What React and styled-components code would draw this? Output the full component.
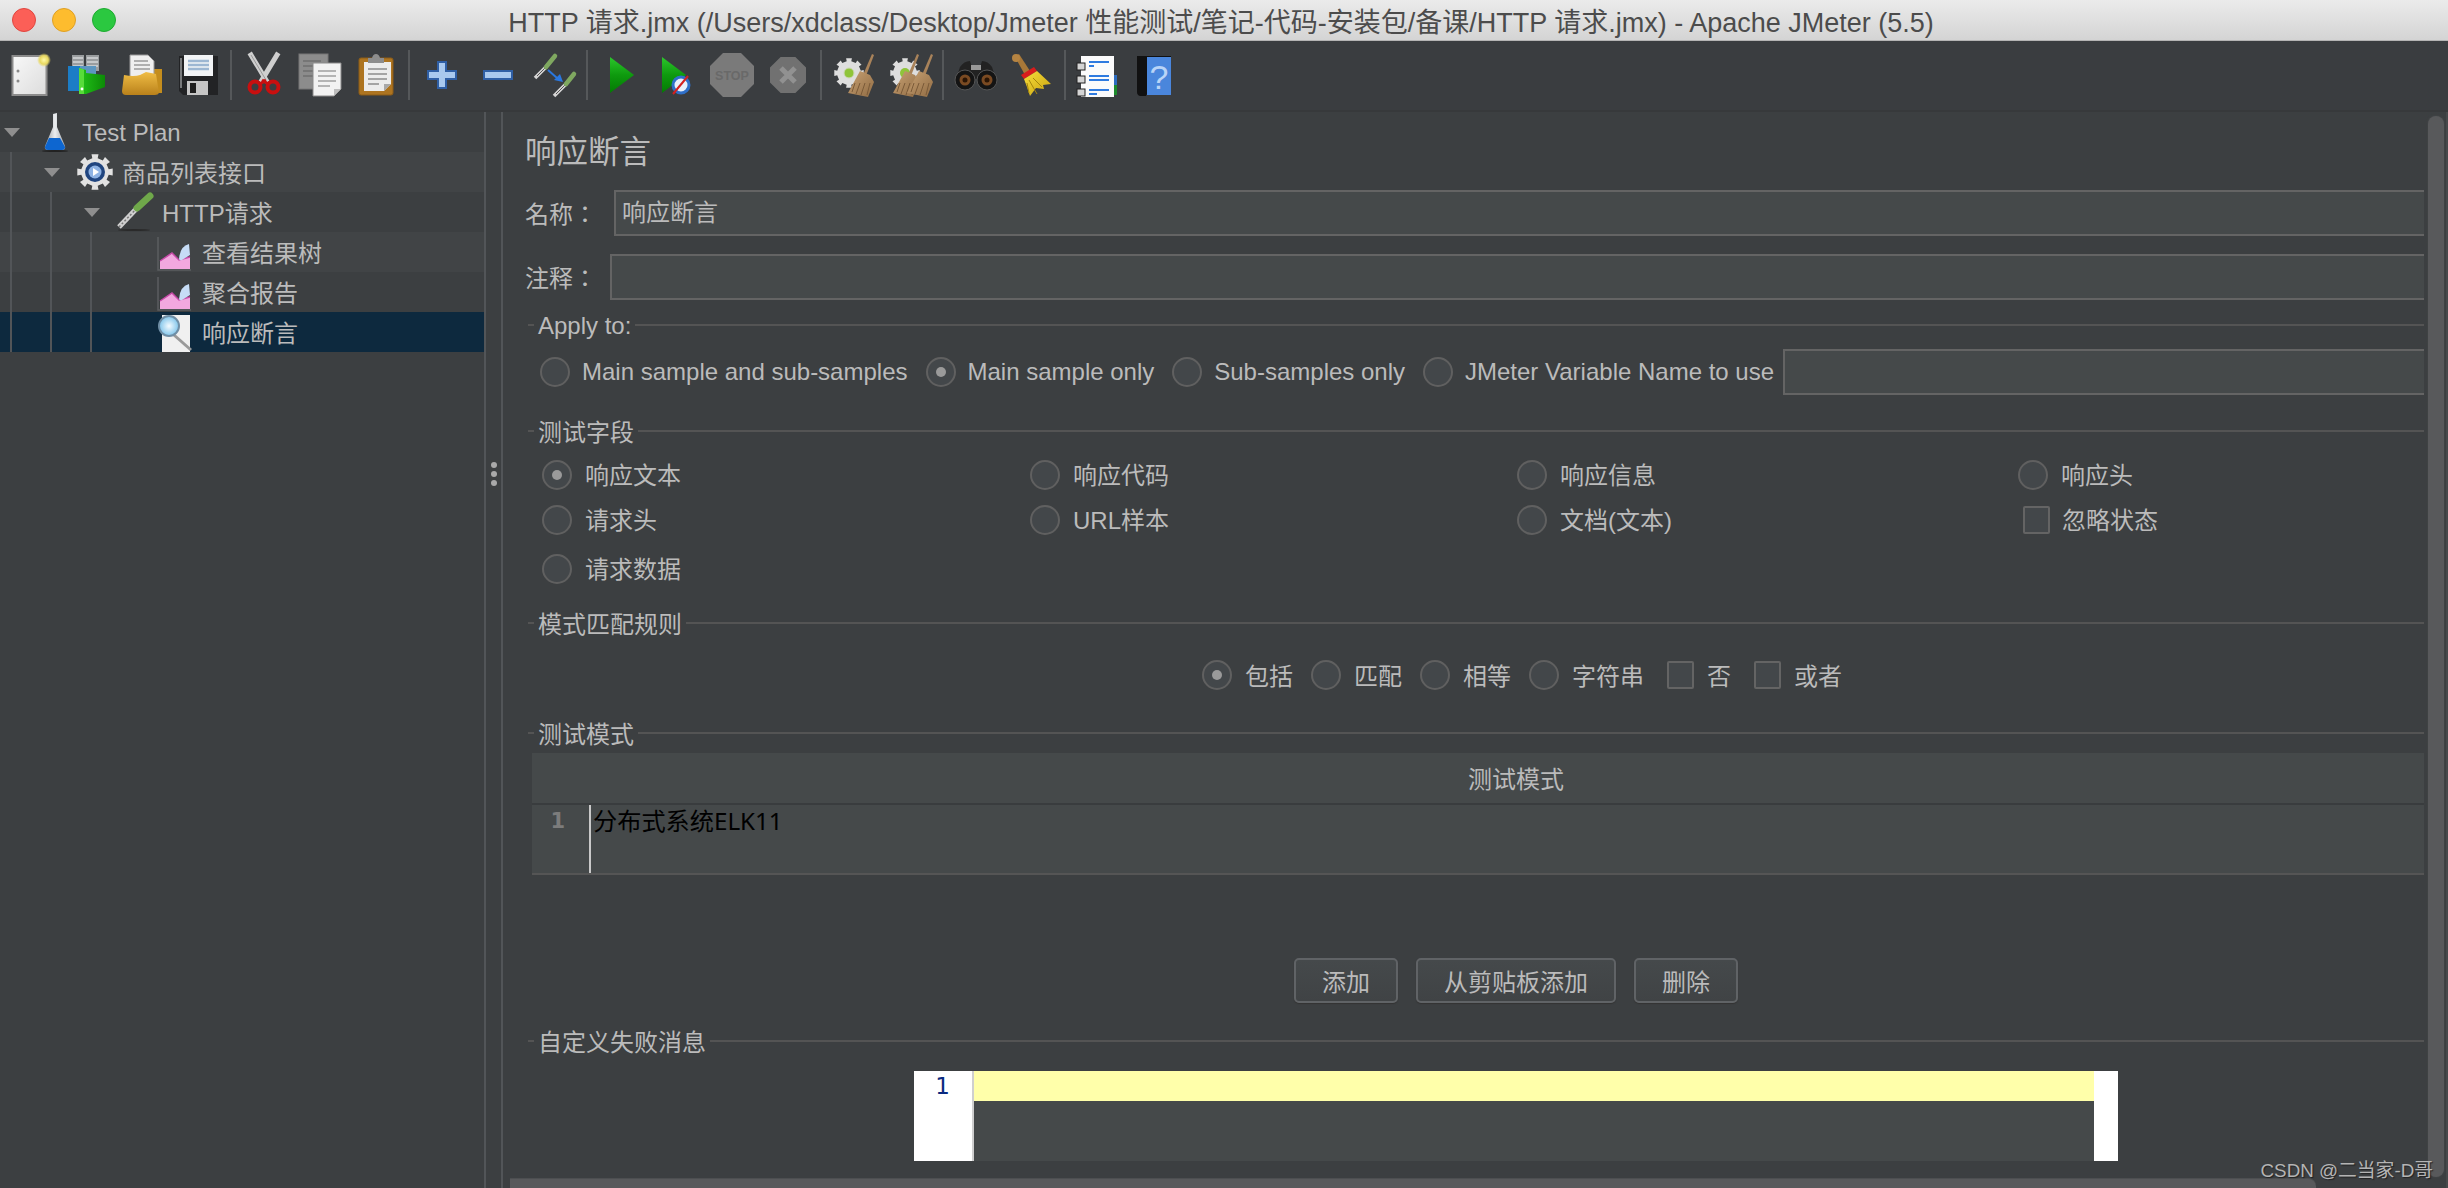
import React from 'react';
import styled, { createGlobalStyle } from 'styled-components';

const Global = createGlobalStyle`
  html, body { margin: 0; padding: 0; background: #3c3f41; }
  * { box-sizing: border-box; }
`;
const FONT = `"Liberation Sans", "Noto Sans CJK SC", sans-serif`;

const Page = styled.div`
  position: relative; width: 2448px; height: 1188px; overflow: hidden;
  display: flex; flex-direction: column; background: #3c3f41; color: #bbbbbb;
  font-family: ${FONT}; font-size: 24px;
`;
const TitleBar = styled.header`
  height: 41px; flex: none; display: flex; align-items: center; justify-content: center; padding-right: 6px;
  background: linear-gradient(#ebebeb, #d4d4d4); border-bottom: 1px solid #b4b4b4; position: relative;
`;
const Lights = styled.div`
  position: absolute; left: 12px; top: 8px; display: flex; gap: 16px;
`;
const Light = styled.span`
  width: 24px; height: 24px; border-radius: 50%; background: ${p => p.$c}; border: 1px solid ${p => p.$b};
`;
const WindowTitle = styled.div`
  color: #4c4c4c; font-size: 27px; white-space: pre;
`;
const Toolbar = styled.nav`
  height: 71px; flex: none; display: flex; align-items: center; padding: 0 0 2px 2px;
  background: #3a3d40; border-bottom: 2px solid #37393b;
`;
const ToolBtn = styled.div`
  width: 56px; height: 44px; flex: none; display: flex; justify-content: center;
  svg { display: block; }
`;
const ToolSep = styled.div`
  width: 2px; height: 50px; margin: 0 4px; background: #55585a; flex: none;
`;
const Body = styled.main`
  flex: 1; min-height: 0; display: flex;
`;
const Tree = styled.aside`
  width: 484px; flex: none;
`;
const Row = styled.div`
  height: 40px; display: flex; align-items: center; white-space: nowrap;
  background: ${p => p.$sel ? '#0d293e' : p.$alt ? '#414446' : 'transparent'};
`;
const Guide = styled.span`
  width: 40px; align-self: stretch; flex: none; position: relative;
  &::before { content: ''; position: absolute; left: 10px; top: 0; bottom: 0; width: 2px; background: #525558; }
`;
const ArrowCell = styled.span`
  width: 24px; flex: none; display: flex; justify-content: center;
`;
const Arrow = styled.span`
  width: 0; height: 0; border-left: 8px solid transparent; border-right: 8px solid transparent;
  border-top: 9px solid #8f8f8f;
  visibility: ${p => p.$hidden ? 'hidden' : 'visible'};
`;
const TreeIcon = styled.span`
  width: 38px; height: 38px; flex: none; margin: 0 8px 0 12px; svg { display: block; }
`;
const TreeLabel = styled.span`
  padding-top: ${p => p.$latin ? 2 : 0}px; padding-bottom: ${p => p.$latin ? 0 : 1}px;
`;
const Splitter = styled.div`
  width: 19px; flex: none; display: flex; flex-direction: column; align-items: center; justify-content: center; gap: 3px;
  border-left: 2px solid #525558; border-right: 2px solid #525558; padding-bottom: 352px;
`;
const Dot = styled.span`
  width: 6px; height: 6px; border-radius: 50%; background: #a9a9a9;
`;
const Right = styled.section`
  flex: 1; min-width: 0; position: relative;
`;
const Clip = styled.div`
  width: 1921px; height: 100%; overflow: hidden;
`;
const Content = styled.div`
  width: 2001px; padding: 13px 0 0 22px; display: flex; flex-direction: column;
`;
const Heading = styled.h1`
  margin: 0; height: 52px; line-height: 54px; font-size: 31.5px; font-weight: 400; color: #bbb;
`;
const Field = styled.div`
  display: flex; align-items: center; height: 46px; margin-top: ${p => p.$mt}px;
`;
const Label = styled.label`
  width: ${p => p.$w}px; flex: none; padding-bottom: 1px;
  font-family: "Liberation Sans", "Noto Sans CJK TC", sans-serif;
`;
const Input = styled.div`
  flex: 1; height: 46px; background: #45494a; border: 2px solid #646464; padding-left: 6px; line-height: 42px;
  margin-left: ${p => p.$ml || 0}px;
`;
const Legend = styled.div`
  height: 30px; margin: ${p => p.$mt}px 0 0 3px; display: flex; align-items: center; gap: 4px;
  &::before { content: ''; width: 6px; height: 2px; background: #545454; flex: none; }
  &::after { content: ''; flex: 1; height: 2px; background: #545454; }
`;
const LegendText = styled.span`
  flex: none; padding-top: ${p => p.$latin ? 2 : 0}px; padding-bottom: ${p => p.$latin ? 0 : 2}px;
`;
const ApplyRow = styled.div`
  height: 46px; margin: 8px 0 0 15px; display: flex; align-items: center; gap: 18px; padding-top: 1px;
`;
const Opt = styled.span`
  display: inline-flex; align-items: center; gap: ${p => p.$gap || 12}px; white-space: nowrap; flex: none;
`;
const OptText = styled.span`
  padding-bottom: ${p => p.$lift ? 2 : 0}px;
`;
const Radio = styled.span`
  width: 30px; height: 30px; border-radius: 50%; flex: none; border: 2px solid #606060; background: #43474a;
  display: flex; align-items: center; justify-content: center;
  &::after { content: ''; width: 10px; height: 10px; border-radius: 50%; background: #9a9a9a; display: ${p => p.$on ? 'block' : 'none'}; }
`;
const Check = styled.span`
  width: 27px; height: 28px; margin-left: 5px; flex: none; border: 2px solid #646464; border-radius: 2px; background: #43474a;
`;
const FieldGrid = styled.div`
  display: grid; grid-template-columns: 488px 487px 501px 1fr; grid-template-rows: 45px 49px 30px;
  margin: 10px 0 0 17px; align-items: start;
`;
const PatternRow = styled.div`
  height: 30px; margin: 22px 0 0 13px; padding-left: 2px; display: flex; justify-content: center; gap: 18px;
  align-items: center;
`;
const Table = styled.div`
  margin: 5px 0 0 7px; width: 1968px;
`;
const TableHead = styled.div`
  height: 52px; background: #45494a; border-bottom: 2px solid #393c3e; text-align: center; line-height: 54px;
`;
const Editor = styled.div`
  height: 70px; background: #45494a; border-bottom: 2px solid #555; display: flex;
`;
const Gutter = styled.div`
  width: 59px; flex: none; border-right: 2px solid #c9c9c9; text-align: right; padding: 1px 24px 0 0;
  color: #7c7c7c; font: 700 21px/30px "DejaVu Sans", sans-serif;
`;
const Code = styled.div`
  color: #000; padding-left: 2px; font: 24.2px/40px "Noto Sans", "Noto Sans CJK SC", sans-serif; height: 34px; margin-top: -4px;
`;
const Buttons = styled.div`
  margin-top: 83px; height: 45px; display: flex; justify-content: center; gap: 18px; padding-left: 3px;
`;
const Btn = styled.button`
  width: ${p => p.$w}px; height: 45px; padding: 0; border: 2px solid #606366; border-radius: 5px;
  background: linear-gradient(#45494b, #404345); color: #bbb; font: inherit; box-shadow: 0 1px 1px #333;
`;
const MsgEditor = styled.div`
  width: 1204px; height: 90px; margin: 15px 0 0 389px; display: flex; background: #fff;
`;
const MsgGutter = styled.div`
  width: 60px; flex: none; background: #fff; border-right: 2px solid #cfcfcf; color: #0a2a80;
  font: 23px/30px "DejaVu Sans", sans-serif; text-align: right; padding-right: 22px;
`;
const MsgArea = styled.div`
  flex: 1; background: #45494a;
`;
const MsgLine = styled.div`
  height: 30px; background: #ffffaa;
`;
const MsgMargin = styled.div`
  width: 24px; flex: none; background: #fff;
`;
const VScroll = styled.div`
  position: absolute; left: 1925px; top: 4px; width: 16px; height: 1061px; background: #58595b;
  border-radius: 8px; box-shadow: 0 0 2px #4a4c4e;
`;
const HScroll = styled.div`
  position: absolute; left: 7px; bottom: 0; width: 1806px; height: 10px; background: #58595b;
  border-radius: 0 8px 0 0; border-top: 1px solid #4d4f51;
`;
const Edge = styled.div`
  position: absolute; left: 1943px; top: 0; bottom: 0; width: 2px; background: #47494b;
`;
const Watermark = styled.div`
  position: absolute; right: 15px; bottom: 6px; font-size: 18.8px; color: #b4b4b4; text-shadow: 1px 1px 1px #222;
  white-space: nowrap;
`;

/* ---------- toolbar drawings ---------- */
const I = ({ children }) => <svg width="44" height="44" viewBox="0 0 44 44" style={{ overflow: 'visible' }}>{children}</svg>;

const Defs = () => (
  <svg width="0" height="0" style={{ position: 'absolute' }}>
    <defs>
      <linearGradient id="paper" x1="0" y1="0" x2="1" y2="1"><stop offset="0" stopColor="#f8f8f8" /><stop offset="1" stopColor="#dcdcdc" /></linearGradient>
      <radialGradient id="glow"><stop offset="0" stopColor="#fff9a8" /><stop offset="0.6" stopColor="#e8d860" /><stop offset="1" stopColor="#e8d860" stopOpacity="0" /></radialGradient>
      <linearGradient id="green" x1="0" y1="0" x2="1" y2="0"><stop offset="0" stopColor="#23c41a" /><stop offset="1" stopColor="#0c8a06" /></linearGradient>
      <linearGradient id="orange" x1="0" y1="0" x2="0" y2="1"><stop offset="0" stopColor="#f0bd45" /><stop offset="1" stopColor="#b9811b" /></linearGradient>
      <linearGradient id="play" x1="0" y1="0" x2="0" y2="1"><stop offset="0" stopColor="#2cc72c" /><stop offset="0.5" stopColor="#0e9a0e" /><stop offset="1" stopColor="#047a04" /></linearGradient>
      <linearGradient id="yellow" x1="0" y1="0" x2="1" y2="1"><stop offset="0" stopColor="#f7dc3a" /><stop offset="1" stopColor="#c9a410" /></linearGradient>
      <linearGradient id="tan" x1="0" y1="0" x2="1" y2="1"><stop offset="0" stopColor="#c9a274" /><stop offset="1" stopColor="#8f6b43" /></linearGradient>
      <radialGradient id="lens"><stop offset="0" stopColor="#f4fbff" /><stop offset="1" stopColor="#7fc4ea" /></radialGradient>
      <linearGradient id="flask" x1="0" y1="0" x2="1" y2="0"><stop offset="0" stopColor="#8f959a" /><stop offset="0.5" stopColor="#eceef0" /><stop offset="1" stopColor="#9aa0a6" /></linearGradient>
    </defs>
  </svg>
);

const NewDoc = () => <I>
  <rect x="4.5" y="3" width="34" height="39" fill="url(#paper)" stroke="#8b8b8b" strokeWidth="2" />
  <circle cx="10" cy="18" r="1.5" fill="#888" /><circle cx="10" cy="28" r="1.5" fill="#888" />
  <circle cx="36" cy="7" r="7" fill="url(#glow)" />
</I>;
const Templates = () => <I>
  <path d="M8 2h12v16H8zM22 2h13v16H22z" fill="#9a9d9f" />
  <path d="M9 5h10M9 9h10M9 13h10M23 5h11M23 9h11M23 13h11" stroke="#c6c8ca" strokeWidth="2" />
  <rect x="4" y="13" width="15" height="25" fill="#1c7dc6" /><rect x="16" y="13" width="16" height="10" fill="#5d96c0" />
  <path d="M15 15l7 2v3l19 2v12l-19 7h-7z" fill="url(#green)" />
  <path d="M15 15l5 1.5V41h-5z" fill="#58dc3a" /><circle cx="18" cy="36" r="1.4" fill="#fff" />
</I>;
const OpenFolder = () => <I>
  <rect x="30" y="16" width="12" height="24" fill="#c48d1d" />
  <path d="M10 2h18l6 6v18H10z" fill="#efefef" stroke="#999" />
  <path d="M14 8h14M14 12h16M14 16h16" stroke="#9a9a9a" strokeWidth="1.5" />
  <path d="M4 22q10 2 16 0l6-3 10 2 3 19q-1 2-4 2H6q-4 0-4-4z" fill="url(#orange)" />
</I>;
const Save = () => <I>
  <path d="M3 3h39v39H7l-4-4z" fill="#222325" /><path d="M5 5v30" stroke="#77797b" strokeWidth="2" />
  <rect x="8" y="2" width="29" height="21" fill="#f2f4f6" />
  <path d="M12 8h21M12 12h21M12 16h21" stroke="#9db7d2" strokeWidth="2.4" />
  <rect x="11" y="28" width="21" height="14" fill="#c6c6c6" /><rect x="14" y="30" width="6" height="10" fill="#1e1e1e" />
</I>;
const Scissors = () => <I>
  <path d="M9 2l15 25M35 2L20 27" stroke="#cfcfcf" strokeWidth="5" strokeLinecap="square" />
  <path d="M9 2l15 25" stroke="#9a9a9a" strokeWidth="1" />
  <circle cx="13" cy="34" r="5.5" fill="none" stroke="#c80f0f" strokeWidth="4" />
  <circle cx="31" cy="34" r="5.5" fill="none" stroke="#c80f0f" strokeWidth="4" />
  <path d="M24 27l-6 4M20 27l6 4" stroke="#c80f0f" strokeWidth="3" />
</I>;
const Copy = () => <I>
  <rect x="1" y="1" width="29" height="35" fill="#8c8c8c" stroke="#777" />
  <path d="M5 8h18M5 13h18M5 18h10M5 23h10" stroke="#6f6f6f" strokeWidth="1.5" />
  <path d="M15 10h28v26l-7 7H15z" fill="#f2f2f2" stroke="#8a8a8a" />
  <path d="M36 43v-7h7z" fill="#bdbdbd" />
  <path d="M20 18h18M20 23h18M20 28h18M20 33h12" stroke="#a0a0a0" strokeWidth="1.6" />
</I>;
const Paste = () => <I>
  <rect x="5" y="5" width="34" height="37" rx="2" fill="#ad7420" stroke="#8c5c16" />
  <path d="M10 9h27v22l-7 7H10z" fill="#ececec" />
  <path d="M30 38v-7h7z" fill="#a8a8a8" />
  <path d="M14 16h19M14 21h19M14 26h19M14 31h11" stroke="#8c8c8c" strokeWidth="1.6" />
  <path d="M14 5h4q1-4 4-4t4 4h4v5H14z" fill="#8d8d8d" />
</I>;
const Plus = () => <I><path d="M18 9h8v9h10v8H26v9h-8v-9H8v-8h10z" fill="#a9c9ee" stroke="#2f5fa5" strokeWidth="2" /></I>;
const Minus = () => <I><rect x="8" y="18" width="28" height="8" fill="#a9c9ee" stroke="#2f5fa5" strokeWidth="2" /></I>;
const Pen = ({ x1, y1, x2, y2, mx, my, w = 3.5 }) => <g>
  <line x1={x1} y1={y1} x2={mx} y2={my} stroke="#d4d4d4" strokeWidth={w} />
  <line x1={x1 + 2} y1={y1 - 2} x2={mx} y2={my} stroke="#555" strokeWidth="1" />
  <line x1={mx} y1={my} x2={x2} y2={y2} stroke="#7fa860" strokeWidth={w + 1} strokeLinecap="round" />
</g>;
const Transfer = () => <I>
  <Pen x1={3} y1={25} mx={14} my={14} x2={23} y2={3} />
  <Pen x1={22} y1={43} mx={34} my={31} x2={42} y2={21} />
  <path d="M16 17l9 8" stroke="#2a78e0" strokeWidth="2" /><path d="M31 29l-9-2 6-6z" fill="#2a78e0" />
</I>;
const Play = () => <I><path d="M12 4l24 18-24 18z" fill="url(#play)" /></I>;
const PlayNo = () => <I>
  <path d="M8 4l24 18L8 40z" fill="url(#play)" />
  <circle cx="27" cy="32" r="8" fill="#e8f0fa" stroke="#2f6fc8" strokeWidth="3" />
  <path d="M19 41l15-18" stroke="#d42020" strokeWidth="2" />
</I>;
const Octagon = ({ r, fill }) => {
  const a = r * 0.41;
  return <path d={`M${22 - a} ${22 - r}h${2 * a}l${r - a} ${r - a}v${2 * a}l${a - r} ${r - a}h${-2 * a}l${a - r} ${a - r}v${-2 * a}z`} fill={fill} />;
};
const StopText = styled.text`
  font: 700 12.5px "Liberation Sans", sans-serif; fill: #696969;
`;
const Stop = () => <I><Octagon r={22} fill="#7a7a7a" /><StopText x="22" y="27" textAnchor="middle">STOP</StopText></I>;
const Shut = () => <I><Octagon r={18} fill="#717171" /><path d="M15 15l14 14M29 15L15 29" stroke="#919191" strokeWidth="5" /></I>;
const gearPath = (cx, cy, R, r, n = 8) => {
  let d = '';
  for (let i = 0; i < n * 2; i++) {
    const step = Math.PI / n;
    const rad = i % 2 ? r : R;
    const a0 = i * step - step / 2, a1 = i * step + step / 2;
    d += `${i ? 'L' : 'M'}${(cx + rad * Math.cos(a0)).toFixed(1)} ${(cy + rad * Math.sin(a0)).toFixed(1)}L${(cx + rad * Math.cos(a1)).toFixed(1)} ${(cy + rad * Math.sin(a1)).toFixed(1)}`;
  }
  return d + 'z';
};
const Twig = ({ dx = 0 }) => <g transform={`translate(${dx} 0)`}>
  <path d="M40 1l2 1-8 21-3-1z" fill="#a9835a" />
  <path d="M28 18l10 4 4 7-6 15-20-4z" fill="url(#tan)" />
  <path d="M23 30l-3 9M28 30l-4 11M33 30l-4 12M38 30l-3 12" stroke="#7a5a38" strokeWidth="1" />
</g>;
const GearBroom = () => <I>
  <path d={gearPath(17, 20, 15, 12)} fill="#dedede" />
  <circle cx="17" cy="20" r="5" fill="#8fc43a" stroke="#cfd8b8" />
  <Twig />
</I>;
const GearBrooms = () => <I>
  <path d={gearPath(17, 20, 15, 12)} fill="#dedede" />
  <circle cx="17" cy="20" r="5" fill="#8fc43a" />
  <Twig dx={-11} /><Twig dx={3} />
</I>;
const Binoculars = () => <I>
  <path d="M6 14q4-6 10-6l2 6h8l2-6q6 0 10 6l4 12H2z" fill="#222" />
  <rect x="17" y="12" width="10" height="5" fill="#999" />
  {[11, 33].map(x => <g key={x}><circle cx={x} cy="27" r="10" fill="#141414" stroke="#555" /><circle cx={x} cy="27" r="5.5" fill="#7a4a22" /><circle cx={x} cy="27" r="2.5" fill="#2a1505" /></g>)}
</I>;
const Broom = () => <I>
  <path d="M5 4l4-3 11 17-5 4z" fill="#a87838" /><circle cx="6" cy="5" r="4" fill="#b68442" />
  <path d="M11 22l13-8 3 4-13 8z" fill="#d81c1c" />
  <path d="M14 26l13-8 14 13-8 1 1 4-8-1-6 8-3-9z" fill="url(#yellow)" />
  <path d="M19 27l8 14M23 25l9 9M17 30l2 10" stroke="#a4860c" strokeWidth="1" />
</I>;
const Notebook = () => <I>
  <rect x="36" y="22" width="5" height="10" fill="#2d6cc0" /><rect x="36" y="32" width="5" height="10" fill="#1d8a2c" />
  <rect x="5" y="3" width="33" height="41" fill="#fbfbfb" />
  {[10, 23, 36].map(y => <rect key={y} x="1" y={y} width="8" height="7" fill="#d4d4d4" stroke="#222" />)}
  <path d="M13 9h20M13 13h5M13 23h20M13 27h20M13 37h20M13 41h8" stroke="#2f7be0" strokeWidth="2" />
</I>;
const HelpText = styled.text`
  font: 400 34px "Liberation Sans", sans-serif; fill: #b9d4f7;
`;
const Help = () => <I>
  <path d="M5 3h34v38H15l-1 2H8q-3-1-3-4z" fill="#111" />
  <rect x="15" y="4" width="24" height="38" fill="#4a86dc" />
  <HelpText x="27" y="36" textAnchor="middle">?</HelpText>
</I>;

/* ---------- tree drawings ---------- */
const T = ({ children }) => <svg width="38" height="38" viewBox="0 0 38 38" style={{ overflow: 'visible' }}>{children}</svg>;
const Flask = () => <T>
  <path d="M17 1l4-1v14l8 19q1 4-3 4H12q-4 0-3-4l8-19z" fill="url(#flask)" />
  <path d="M13 25h11l5 9q0 3-3 3H12q-3 0-3-3z" fill="#0d66d0" />
  <ellipse cx="19" cy="38" rx="13" ry="1" fill="#222" />
</T>;
const Gear = () => <T>
  <path d={gearPath(19, 19, 18, 14)} fill="#e2e2e2" />
  <circle cx="19" cy="19" r="10" fill="#20457f" /><circle cx="19" cy="19" r="6.5" fill="#8fb3e4" />
  <path d="M17 15l6 4-6 4z" fill="#fff" />
</T>;
const Pipette = () => <T>
  <path d="M3 34L22 14" stroke="#d0d0d0" strokeWidth="5" /><path d="M3 34L22 14" stroke="#777" strokeWidth="1.5" strokeDasharray="2 2" />
  <path d="M21 15L34 3" stroke="#6fa84a" strokeWidth="7" strokeLinecap="round" />
  <ellipse cx="18" cy="37" rx="16" ry="1" fill="#2a2a2a" />
</T>;
const Chart = () => <T>
  <path d="M2 4v33h33" fill="none" stroke="#5b5e60" strokeWidth="1.5" />
  <path d="M4 28l12-8 7 7 11-3v12H4z" fill="#f2a8df" />
  <path d="M4 28l12-8 7 7 11-3" fill="none" stroke="#c64aa8" strokeWidth="1.5" />
  <path d="M33 11q-9 2-10 15 1 2 3 1l8-5z" fill="#c6dcf6" />
</T>;
const Finder = () => <T>
  <path d="M6 6h28v37H6z" transform="translate(0 -4)" fill="#f0f0f0" />
  <path d="M18 22l17 15" stroke="#9a9a9a" strokeWidth="3" />
  <circle cx="13" cy="13" r="10" fill="url(#lens)" stroke="#6f8ea5" strokeWidth="2" />
</T>;

const tools = [
  [NewDoc, Templates, OpenFolder, Save],
  [Scissors, Copy, Paste],
  [Plus, Minus, Transfer],
  [Play, PlayNo, Stop, Shut],
  [GearBroom, GearBrooms],
  [Binoculars, Broom],
  [Notebook, Help],
];

const treeItems = [
  { depth: 0, arrow: true, Icon: Flask, text: 'Test Plan', latin: true },
  { depth: 1, arrow: true, Icon: Gear, text: '商品列表接口', alt: true },
  { depth: 2, arrow: true, Icon: Pipette, text: 'HTTP请求' },
  { depth: 3, Icon: Chart, text: '查看结果树', alt: true },
  { depth: 3, Icon: Chart, text: '聚合报告' },
  { depth: 3, Icon: Finder, text: '响应断言', sel: true },
];

const ROption = ({ on, gap, lift, children }) => <Opt $gap={gap}><Radio $on={on} /><OptText $lift={lift}>{children}</OptText></Opt>;
const COption = ({ gap, children }) => <Opt $gap={gap}><Check /><OptText $lift>{children}</OptText></Opt>;

export default function App() {
  return (
    <Page>
      <Global />
      <Defs />
      <TitleBar>
        <Lights>
          <Light $c="#fc5f57" $b="#e0463f" />
          <Light $c="#fdbc2e" $b="#dfa024" />
          <Light $c="#2bc840" $b="#1eab31" />
        </Lights>
        <WindowTitle>HTTP 请求.jmx (/Users/xdclass/Desktop/Jmeter 性能测试/笔记-代码-安装包/备课/HTTP 请求.jmx) - Apache JMeter (5.5)</WindowTitle>
      </TitleBar>
      <Toolbar>
        {tools.map((group, g) => (
          <React.Fragment key={g}>
            {g > 0 && <ToolSep />}
            {group.map((C, i) => <ToolBtn key={i}><C /></ToolBtn>)}
          </React.Fragment>
        ))}
      </Toolbar>
      <Body>
        <Tree>
          {treeItems.map(({ depth, arrow, Icon, text, alt, sel, latin }) => (
            <Row key={text} $alt={alt} $sel={sel}>
              {Array.from({ length: depth }, (_, i) => <Guide key={i} />)}
              <ArrowCell><Arrow $hidden={!arrow} /></ArrowCell>
              <TreeIcon><Icon /></TreeIcon>
              <TreeLabel $latin={latin}>{text}</TreeLabel>
            </Row>
          ))}
        </Tree>
        <Splitter><Dot /><Dot /><Dot /></Splitter>
        <Right>
          <Clip>
            <Content>
              <Heading>响应断言</Heading>
              <Field $mt={13}><Label $w={89}>名称：</Label><Input>响应断言</Input></Field>
              <Field $mt={18}><Label $w={85}>注释：</Label><Input /></Field>

              <Legend $mt={10}><LegendText $latin>Apply to:</LegendText></Legend>
              <ApplyRow>
                <ROption>Main sample and sub-samples</ROption>
                <ROption on>Main sample only</ROption>
                <ROption>Sub-samples only</ROption>
                <ROption>JMeter Variable Name to use</ROption>
                <Input $ml={-9} />
              </ApplyRow>

              <Legend $mt={22}><LegendText>测试字段</LegendText></Legend>
              <FieldGrid>
                <ROption on lift gap={13}>响应文本</ROption>
                <ROption lift gap={13}>响应代码</ROption>
                <ROption lift gap={13}>响应信息</ROption>
                <ROption lift gap={13}>响应头</ROption>
                <ROption lift gap={13}>请求头</ROption>
                <ROption lift gap={13}>URL样本</ROption>
                <ROption lift gap={13}>文档(文本)</ROption>
                <COption gap={12}>忽略状态</COption>
                <ROption lift gap={13}>请求数据</ROption>
              </FieldGrid>

              <Legend $mt={28}><LegendText>模式匹配规则</LegendText></Legend>
              <PatternRow>
                <ROption on lift gap={13}>包括</ROption>
                <ROption lift gap={13}>匹配</ROption>
                <ROption lift gap={13}>相等</ROption>
                <ROption lift gap={13}>字符串</ROption>
                <COption gap={13}>否</COption>
                <COption gap={13}>或者</COption>
              </PatternRow>

              <Legend $mt={28}><LegendText>测试模式</LegendText></Legend>
              <Table>
                <TableHead>测试模式</TableHead>
                <Editor>
                  <Gutter>1</Gutter>
                  <Code>分布式系统ELK11</Code>
                </Editor>
              </Table>

              <Buttons>
                <Btn $w={104}>添加</Btn>
                <Btn $w={200}>从剪贴板添加</Btn>
                <Btn $w={104}>删除</Btn>
              </Buttons>

              <Legend $mt={23}><LegendText>自定义失败消息</LegendText></Legend>
              <MsgEditor>
                <MsgGutter>1</MsgGutter>
                <MsgArea><MsgLine /></MsgArea>
                <MsgMargin />
              </MsgEditor>
            </Content>
          </Clip>
          <VScroll />
          <HScroll />
          <Edge />
        </Right>
      </Body>
      <Watermark>CSDN @二当家-D哥</Watermark>
    </Page>
  );
}
